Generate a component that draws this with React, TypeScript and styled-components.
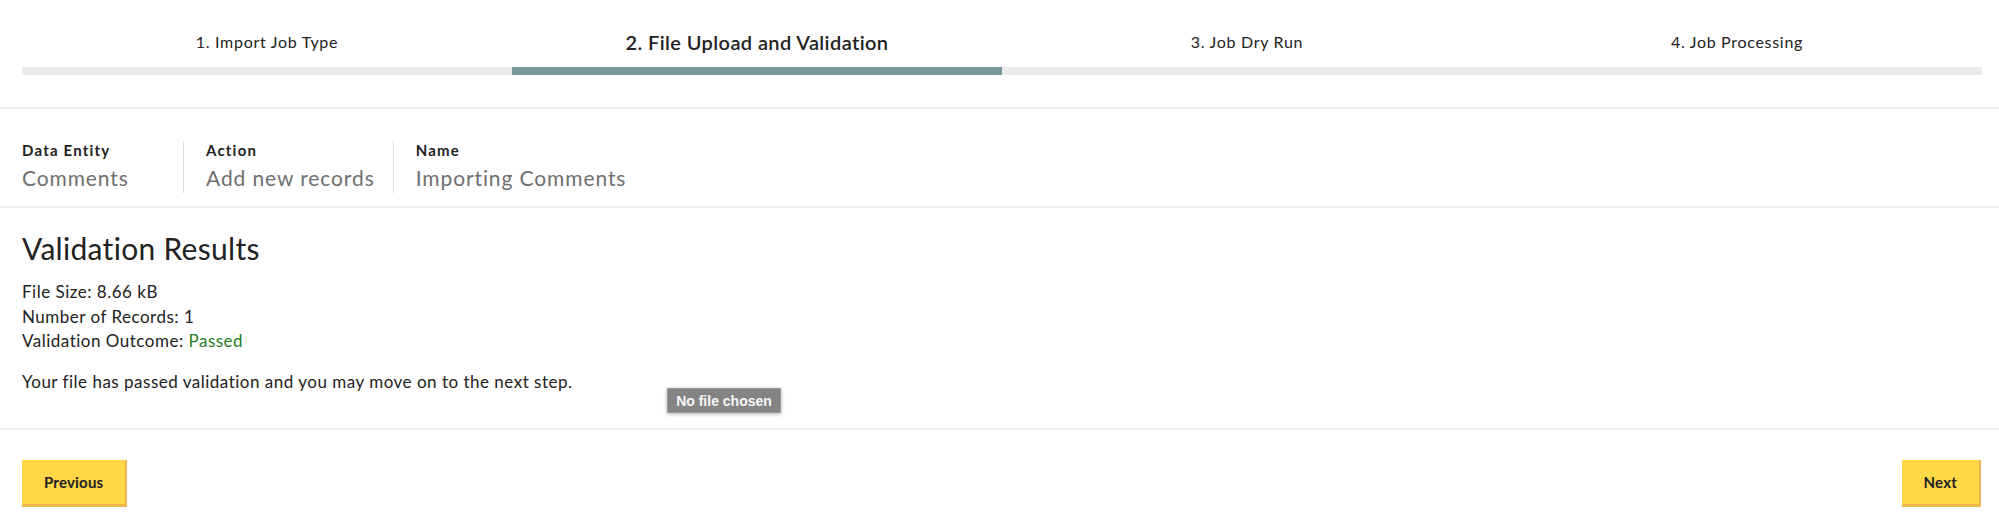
import React from "react";
import styled, { createGlobalStyle } from "styled-components";

const Global = createGlobalStyle`
  html, body { margin: 0; padding: 0; background: #ffffff; }
  body {
    font-family: Lato, "Open Sans", Arial, sans-serif;
    color: #222222;
    -webkit-font-smoothing: antialiased;
  }
  * { box-sizing: border-box; }
`;

const Page = styled.div`
  width: 1999px;
  min-height: 527px;
  display: flex;
  flex-direction: column;
`;

const Stepper = styled.div`
  display: grid;
  grid-template-columns: repeat(4, 1fr);
  padding: 19px 17px 32px 22px;
  border-bottom: 2px solid #efefef;
`;

const Step = styled.div`
  display: flex;
  flex-direction: column;
`;

const StepLabel = styled.div<{ $active?: boolean }>`
  height: 48px;
  padding-bottom: 3px;
  display: flex;
  align-items: center;
  justify-content: center;
  font-size: ${(p) => (p.$active ? "20px" : "16px")};
  font-weight: ${(p) => (p.$active ? 600 : 400)};
  letter-spacing: ${(p) => (p.$active ? "0.4px" : "0.7px")};
  color: #222222;
`;

const StepBar = styled.div<{ $active?: boolean }>`
  height: 8px;
  background: ${(p) => (p.$active ? "#77969b" : "#ebebeb")};
`;

const InfoRow = styled.div`
  display: flex;
  padding: 32px 22px 13px 22px;
  border-bottom: 2px solid #efefef;
`;

const InfoCol = styled.div<{ $first?: boolean; $minWidth?: number }>`
  display: flex;
  flex-direction: column;
  padding: 0 18px 0 ${(p) => (p.$first ? "0" : "22px")};
  min-width: ${(p) => (p.$minWidth ? `${p.$minWidth}px` : "auto")};
  border-left: ${(p) => (p.$first ? "none" : "1px solid #dcdcdc")};
`;

const InfoLabel = styled.div`
  font-size: 15px;
  line-height: 18px;
  font-weight: 700;
  letter-spacing: 1.2px;
  color: #222222;
`;

const InfoValue = styled.div`
  margin-top: 4px;
  font-size: 21px;
  line-height: 30px;
  letter-spacing: 0.9px;
  color: #6f6f6f;
`;

const Results = styled.section`
  position: relative;
  padding: 22px 22px 34px 22px;
  border-bottom: 2px solid #efefef;
`;

const Heading = styled.h2`
  margin: 0 0 14px 0;
  font-size: 30px;
  line-height: 36px;
  font-weight: 400;
  letter-spacing: 0.3px;
  color: #222222;
`;

const Line = styled.div`
  font-size: 17px;
  line-height: 24.5px;
  letter-spacing: 0.5px;
  color: #222222;
`;

const Passed = styled.span`
  color: #1f7f1f;
`;

const Message = styled.p`
  margin: 16px 0 0 0;
  font-size: 17px;
  line-height: 24.5px;
  letter-spacing: 0.5px;
  color: #222222;
`;

const Tooltip = styled.div`
  position: absolute;
  left: 667px;
  top: 180px;
  width: 114px;
  height: 25px;
  display: flex;
  align-items: center;
  justify-content: center;
  background: #848484;
  border: 1px solid #9a9a9a;
  box-shadow: 0 1px 4px rgba(0, 0, 0, 0.3);
  color: #f7f7f7;
  font-family: "Liberation Sans", Arial, sans-serif;
  font-size: 14px;
  font-weight: 700;
`;

const Footer = styled.div`
  display: flex;
  justify-content: space-between;
  align-items: flex-start;
  padding: 30px 18px 19px 22px;
`;

const Button = styled.button`
  height: 47px;
  padding: 0 22px;
  background: #ffd747;
  border: none;
  border-right: 2px solid #ecb84c;
  border-bottom: 3px solid #ecb84c;
  border-radius: 0;
  font-family: Lato, Arial, sans-serif;
  font-size: 15px;
  font-weight: 700;
  letter-spacing: 0.2px;
  color: #222222;
  cursor: pointer;
`;

const steps = [
  "1. Import Job Type",
  "2. File Upload and Validation",
  "3. Job Dry Run",
  "4. Job Processing",
];

export default function App() {
  return (
    <Page>
      <Global />
      <Stepper>
        {steps.map((s, i) => (
          <Step key={s}>
            <StepLabel $active={i === 1}>{s}</StepLabel>
            <StepBar $active={i === 1} />
          </Step>
        ))}
      </Stepper>
      <InfoRow>
        <InfoCol $first $minWidth={161}>
          <InfoLabel>Data Entity</InfoLabel>
          <InfoValue>Comments</InfoValue>
        </InfoCol>
        <InfoCol>
          <InfoLabel>Action</InfoLabel>
          <InfoValue>Add new records</InfoValue>
        </InfoCol>
        <InfoCol>
          <InfoLabel>Name</InfoLabel>
          <InfoValue>Importing Comments</InfoValue>
        </InfoCol>
      </InfoRow>
      <Results>
        <Heading>Validation Results</Heading>
        <Line>File Size: 8.66 kB</Line>
        <Line>Number of Records: 1</Line>
        <Line>
          Validation Outcome: <Passed>Passed</Passed>
        </Line>
        <Message>
          Your file has passed validation and you may move on to the next step.
        </Message>
        <Tooltip>No file chosen</Tooltip>
      </Results>
      <Footer>
        <Button>Previous</Button>
        <Button>Next</Button>
      </Footer>
    </Page>
  );
}
